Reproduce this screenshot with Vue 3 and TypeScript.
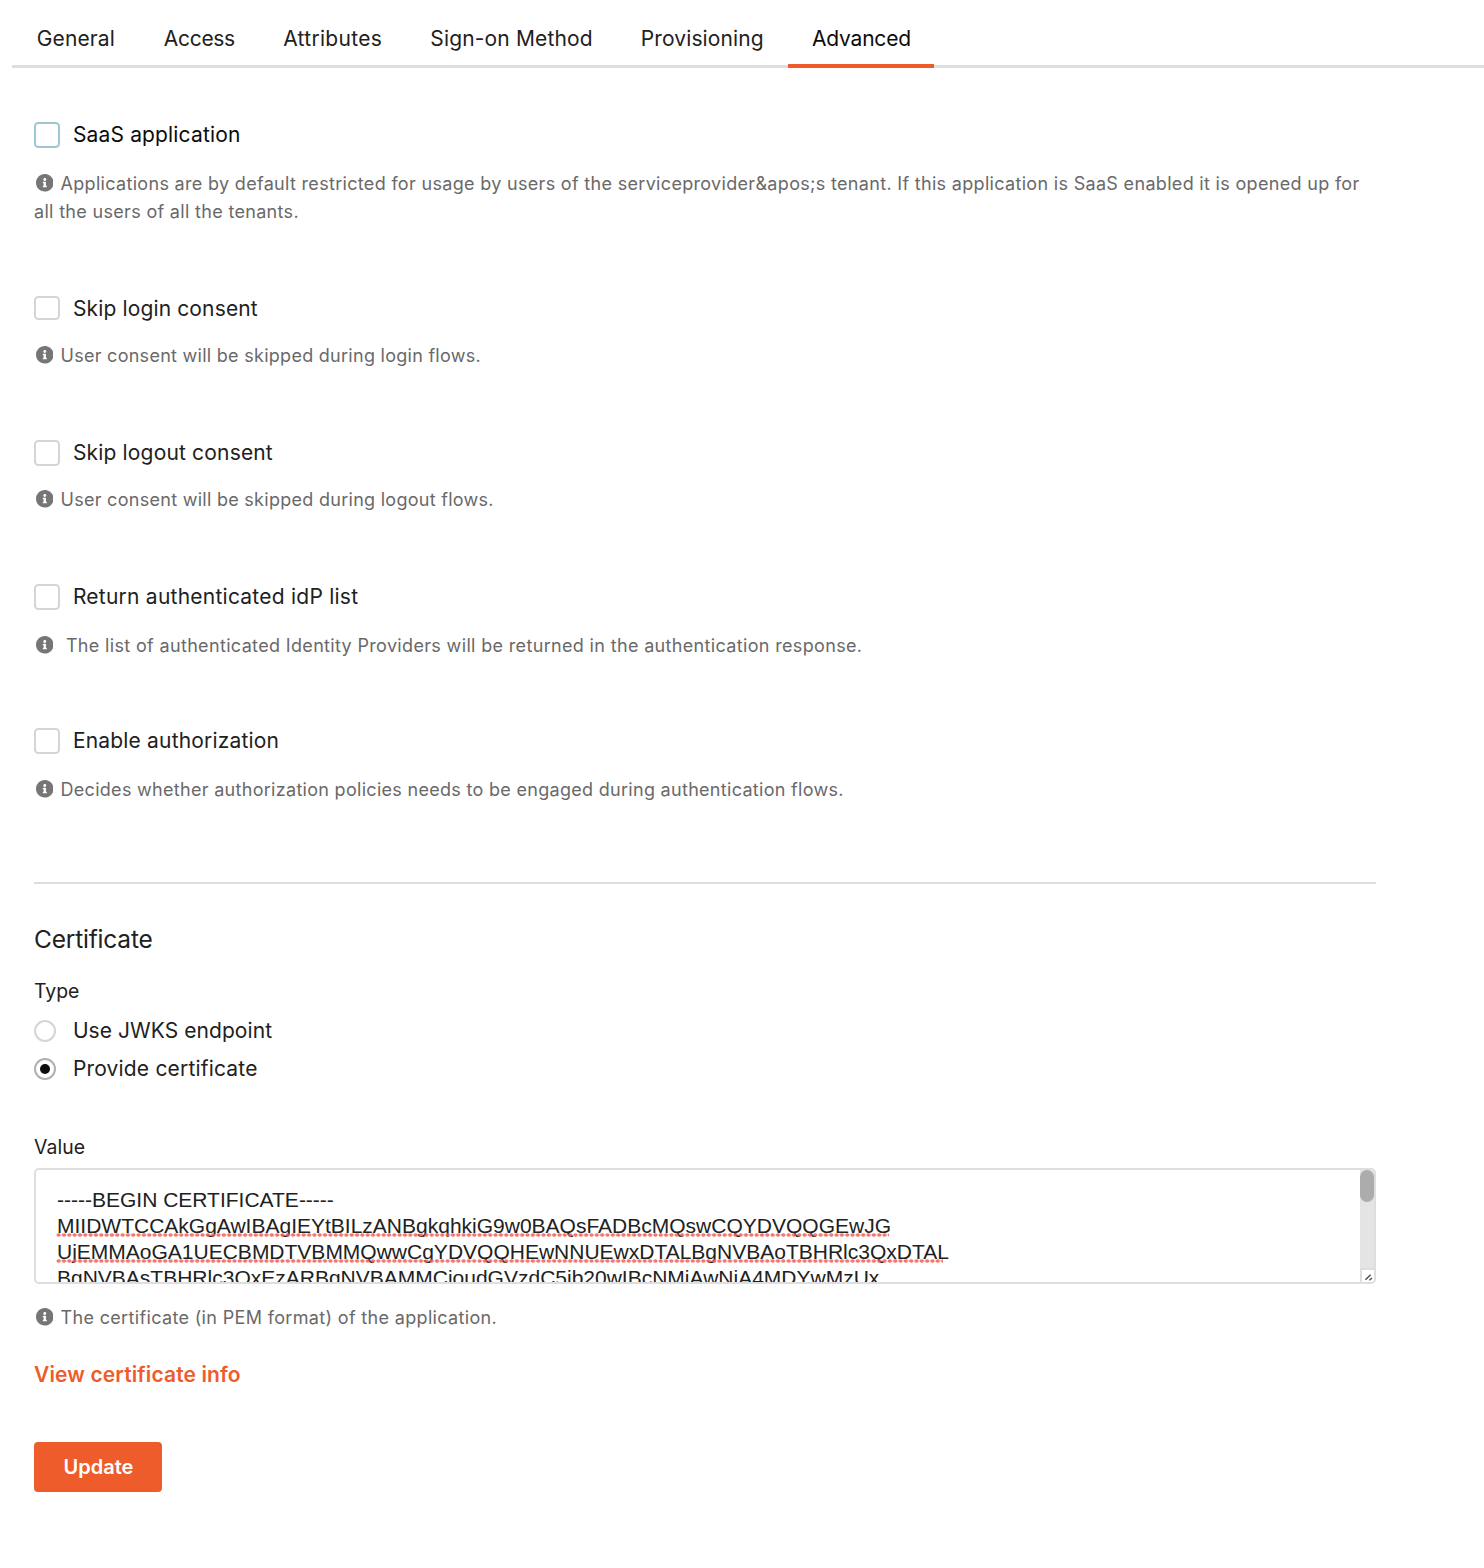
<script setup lang="ts">
import { ref, h, type FunctionalComponent } from 'vue'

interface Tab {
  label: string
  width: number
  tracking: number
}

interface Option {
  label: string
  hint: string
  tracking: number
  hintTracking: number
  kind?: string
}

const INFO_PATH =
  'M256 8C119.043 8 8 119.083 8 256c0 136.997 111.043 248 248 248s248-111.003 248-248C504 119.083 392.957 8 256 8zm0 110c23.196 0 42 18.804 42 42s-18.804 42-42 42-42-18.804-42-42 18.804-42 42-42zm56 254c0 6.627-5.373 12-12 12h-88c-6.627 0-12-5.373-12-12v-24c0-6.627 5.373-12 12-12h12v-64h-12c-6.627 0-12-5.373-12-12v-24c0-6.627 5.373-12 12-12h64c6.627 0 12 5.373 12 12v100h12c6.627 0 12 5.373 12 12v24z'

const InfoIcon: FunctionalComponent = () =>
  h('svg', { viewBox: '8 8 496 496', 'aria-hidden': 'true' }, [
    h('path', { d: INFO_PATH, fill: 'currentColor' }),
  ])

const tabs: Tab[] = [
  { label: 'General', width: 127, tracking: 0.1 },
  { label: 'Access', width: 119.4, tracking: -0.3 },
  { label: 'Attributes', width: 147.1, tracking: 0.3 },
  { label: 'Sign-on Method', width: 210.5, tracking: 0.16 },
  { label: 'Provisioning', width: 172, tracking: 0.12 },
  { label: 'Advanced', width: 146, tracking: -0.2 },
]
const activeTab = ref('Advanced')

const options: Option[] = [
  {
    label: 'SaaS application',
    hint: 'Applications are by default restricted for usage by users of the serviceprovider&apos;s tenant. If this application is SaaS enabled it is opened up for all the users of all the tenants.',
    tracking: 0.16,
    hintTracking: 0.317,
    kind: 'focused wide',
  },
  {
    label: 'Skip login consent',
    hint: 'User consent will be skipped during login flows.',
    tracking: 0.14,
    hintTracking: 0.275,
    kind: 'short tight',
  },
  {
    label: 'Skip logout consent',
    hint: 'User consent will be skipped during logout flows.',
    tracking: 0.17,
    hintTracking: 0.28,
    kind: 'tight',
  },
  {
    label: 'Return authenticated idP list',
    hint: 'The list of authenticated Identity Providers will be returned in the authentication response.',
    tracking: 0.24,
    hintTracking: 0.34,
    kind: 'spaced',
  },
  {
    label: 'Enable authorization',
    hint: 'Decides whether authorization policies needs to be engaged during authentication flows.',
    tracking: 0.18,
    hintTracking: 0.297,
  },
]

const certTypes = [
  { label: 'Use JWKS endpoint', tracking: 0.06 },
  { label: 'Provide certificate', tracking: 0.18 },
]
const certType = ref('Provide certificate')

const certificate = [
  { text: '-----BEGIN CERTIFICATE-----', marked: 0 },
  { text: 'MIIDWTCCAkGgAwIBAgIEYtBILzANBgkqhkiG9w0BAQsFADBcMQswCQYDVQQGEwJG', marked: 833 },
  { text: 'UjEMMAoGA1UECBMDTVBMMQwwCgYDVQQHEwNNUEwxDTALBgNVBAoTBHRlc3QxDTAL', marked: 887 },
  { text: 'BgNVBAsTBHRlc3QxEzARBgNVBAMMCioudGVzdC5jb20wIBcNMjAwNjA4MDYwMzUx', marked: 0 },
]
</script>

<template>
  <div class="page">
    <nav class="tabs">
      <a
        v-for="tab in tabs"
        :key="tab.label"
        class="tab"
        :class="{ active: tab.label === activeTab }"
        :style="{ width: tab.width + 'px', letterSpacing: tab.tracking + 'px' }"
        @click="activeTab = tab.label"
        >{{ tab.label }}</a
      >
    </nav>

    <main class="form">
      <section v-for="opt in options" :key="opt.label" class="option" :class="opt.kind">
        <label class="choice">
          <span class="box"></span>
          <span class="choice-label" :style="{ letterSpacing: opt.tracking + 'px' }">{{ opt.label }}</span>
        </label>
        <p class="hint" :style="{ letterSpacing: opt.hintTracking + 'px' }"><InfoIcon class="info" />{{ opt.hint }}</p>
      </section>

      <hr class="divider" />

      <h2 class="heading">Certificate</h2>
      <div class="field-label">Type</div>
      <label v-for="item in certTypes" :key="item.label" class="choice radio-row">
        <span class="radio" :class="{ checked: item.label === certType }"></span>
        <span class="choice-label" :style="{ letterSpacing: item.tracking + 'px' }">{{ item.label }}</span>
      </label>

      <div class="field-label value-label">Value</div>
      <div class="textarea">
        <div class="lines">
          <div v-for="line in certificate" :key="line.text" class="line">
            {{ line.text }}
            <i v-if="line.marked" class="squiggle" :style="{ width: line.marked + 'px' }"></i>
          </div>
        </div>
        <div class="scrollbar">
          <div class="thumb"></div>
          <div class="corner">
            <svg width="12" height="12" viewBox="0 0 12 12">
              <path d="M3.4 9.8 8.6 4.8M7.4 10.2 10 8" stroke="#4a4a4a" stroke-width="1.4" fill="none" />
            </svg>
          </div>
        </div>
      </div>
      <p class="hint cert-hint"><InfoIcon class="info" />The certificate (in PEM format) of the application.</p>

      <a class="link">View certificate info</a>
      <button class="update" type="button">Update</button>
    </main>
  </div>
</template>

<style>
body {
  background: #fff;
}
</style>

<style scoped>
.page {
  box-sizing: border-box;
  width: 1484px;
  height: 1568px;
  overflow: hidden;
  font-family: Inter, "Liberation Sans", sans-serif;
  font-size: 21px;
  color: #212121;
}

.tabs {
  display: flex;
  box-sizing: border-box;
  height: 68px;
  margin-left: 12px;
  border-bottom: 3px solid #dedede;
}

.tab {
  box-sizing: border-box;
  flex: none;
  height: 68px;
  padding: 24px 0 0 24.8px;
  line-height: 29px;
  white-space: nowrap;
}

.tab.active {
  padding-left: 24px;
  border-bottom: 4px solid #ee5c2b;
  color: #0c0c0c;
}

.form {
  width: 1342px;
  margin: 54px 0 0 34px;
}

.option {
  height: 144px;
}

.option.wide {
  height: 174px;
}

.choice {
  display: flex;
  height: 26px;
  line-height: 25px;
}

.box {
  box-sizing: border-box;
  flex: none;
  width: 26px;
  height: 26px;
  margin-right: 12.9px;
  border: 2px solid #d5d5d6;
  border-radius: 4.5px;
}

.short .box {
  height: 24px;
}

.focused .box {
  border-color: #9dc6d5;
}

.focused .choice-label {
  color: #0c0c0c;
}

.choice-label {
  white-space: nowrap;
}

.hint {
  margin: 22px 0 0;
  font-size: 18px;
  line-height: 28px;
  color: #696969;
}

.tight .hint {
  margin-top: 20px;
}

.info {
  display: inline-block;
  width: 17.6px;
  height: 17.6px;
  margin: 0 7.1px 0 1.8px;
  vertical-align: -2px;
  color: #767676;
}

.spaced .info {
  margin-right: 12.5px;
}

.divider {
  height: 2px;
  margin: 10px 0 0;
  border: 0;
  background: #dedede;
}

.heading {
  margin: 40px 0 25px;
  font-size: 24.5px;
  font-weight: 400;
  line-height: 30px;
  letter-spacing: -0.2px;
}

.field-label {
  font-size: 19.4px;
  line-height: 24px;
}

.radio-row {
  height: 22px;
  margin-top: 17px;
  line-height: 21px;
}

.radio-row + .radio-row {
  margin-top: 16px;
}

.radio {
  display: flex;
  box-sizing: border-box;
  flex: none;
  align-items: center;
  justify-content: center;
  width: 22px;
  height: 22px;
  margin-right: 16.9px;
  border: 2px solid #d5d5d6;
  border-radius: 50%;
}

.radio.checked {
  border-color: #b0b0b1;
}

.radio.checked::after {
  width: 10px;
  height: 10px;
  border-radius: 50%;
  background: #0c0c0c;
  content: "";
}

.value-label {
  margin-top: 55px;
  letter-spacing: 0.1px;
}

.textarea {
  display: flex;
  box-sizing: border-box;
  height: 116px;
  margin-top: 9px;
  border: 2px solid #dedede;
  border-radius: 5px;
  overflow: hidden;
}

.lines {
  flex: 1;
  height: 95px;
  padding: 17px 0 0 21px;
  overflow: hidden;
  font-family: "Liberation Sans", Arial, sans-serif;
  font-size: 21px;
  line-height: 26px;
  white-space: nowrap;
}

.line {
  position: relative;
  height: 26px;
}

.squiggle {
  position: absolute;
  top: 20px;
  left: -1px;
  height: 4px;
  background: radial-gradient(ellipse 2.6px 2.1px at 50% 50%, rgba(240, 96, 86, 0.85) 62%, rgba(240, 96, 86, 0) 100%) 0 0 / 5.33px 4px repeat-x;
}

.scrollbar {
  display: flex;
  flex: none;
  flex-direction: column;
  width: 14px;
  background: #e4e4e4;
}

.thumb {
  height: 32px;
  border-radius: 7px;
  background: #acacac;
}

.corner {
  box-sizing: border-box;
  height: 14px;
  margin-top: auto;
  border: solid #dedede;
  border-width: 2px 0 0 2px;
  background: #fff;
}

.corner svg {
  display: block;
}

.cert-hint {
  margin-top: 20px;
  letter-spacing: 0.34px;
}

.link {
  display: block;
  width: max-content;
  margin-top: 30px;
  font-weight: 600;
  line-height: 25px;
  letter-spacing: 0.13px;
  color: #ee5c2b;
}

.update {
  display: block;
  width: 128px;
  height: 50px;
  margin-top: 55px;
  padding: 0 0 0 1px;
  border: 0;
  border-radius: 4px;
  background: #ee5c2b;
  font-family: inherit;
  font-size: 20px;
  font-weight: 600;
  line-height: 24px;
  color: #fff;
}
</style>
